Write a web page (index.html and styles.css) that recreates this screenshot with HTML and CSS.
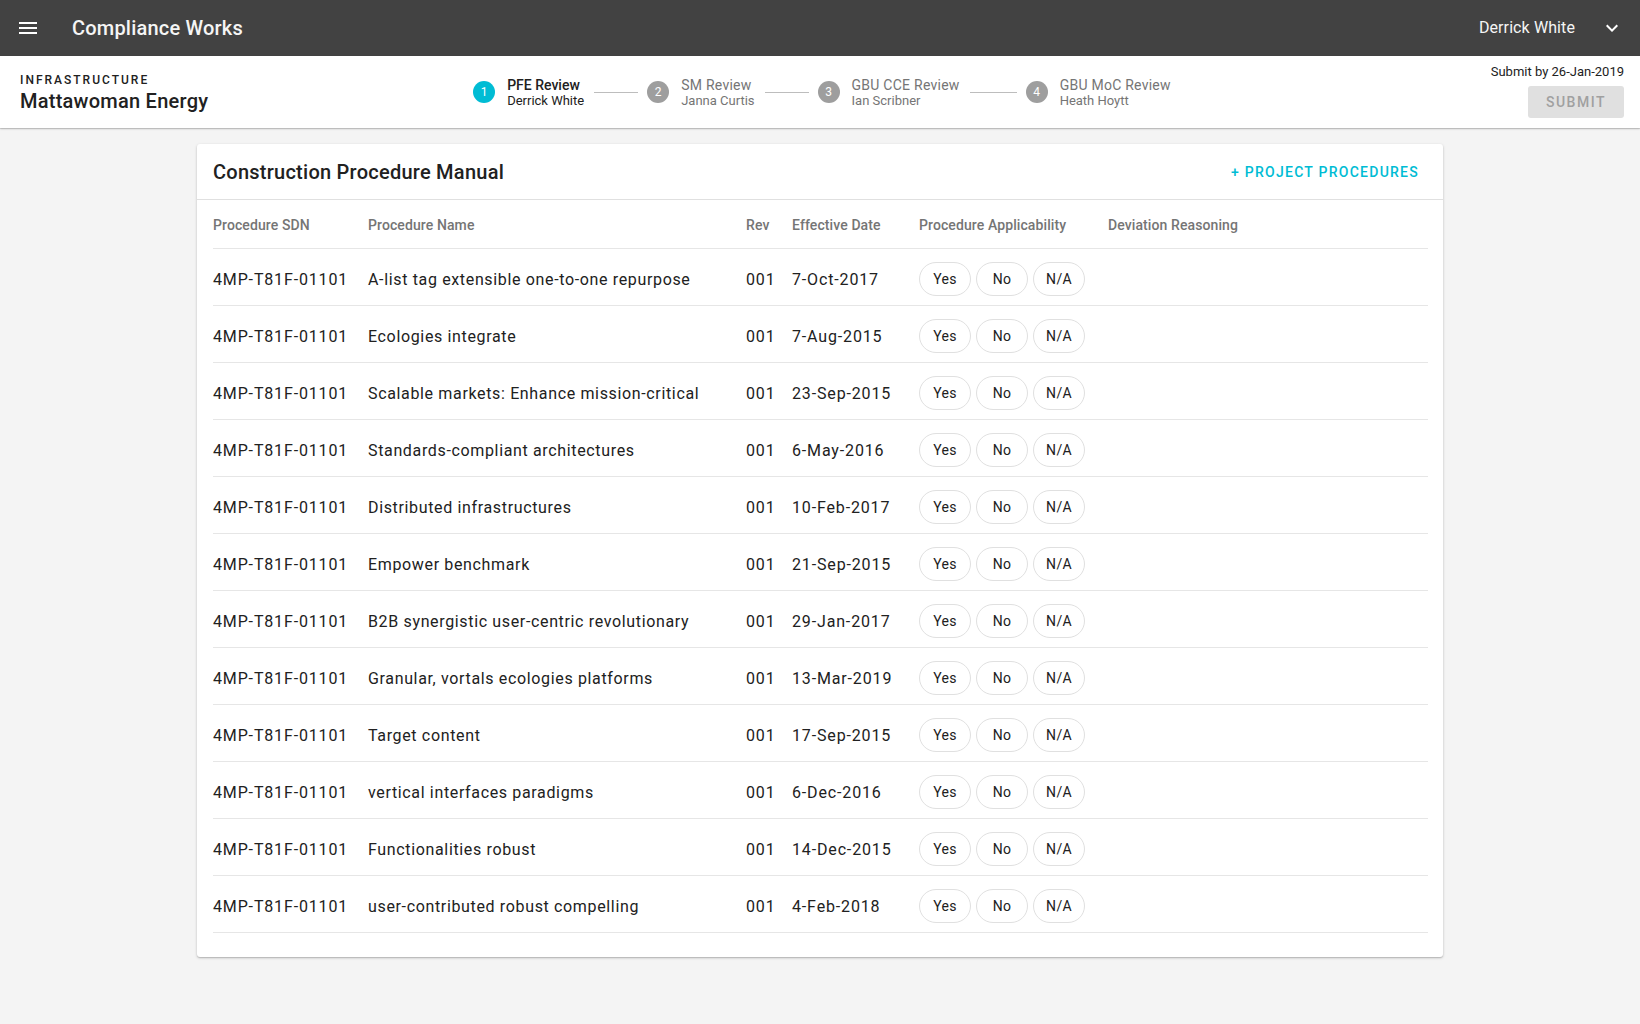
FILE: index.html
```html
<!DOCTYPE html>
<html lang="en">
<head>
<meta charset="utf-8">
<title>Compliance Works</title>
<link rel="stylesheet" href="styles.css">
</head>
<body>
<header class="appbar">
  <button class="icon-btn menu" aria-label="Menu">
    <svg width="24" height="24" viewBox="0 0 24 24"><path d="M3 18h18v-2H3v2zm0-5h18v-2H3v2zm0-7v2h18V6H3z" fill="#fff"/></svg>
  </button>
  <div class="app-title">Compliance Works</div>
  <div class="spacer"></div>
  <div class="user">Derrick White</div>
  <button class="icon-btn chevron" aria-label="Account menu">
    <svg width="24" height="24" viewBox="0 0 24 24"><path d="M16.59 8.59L12 13.17 7.41 8.59 6 10l6 6 6-6z" fill="#fff"/></svg>
  </button>
</header>

<section class="subbar">
  <div class="project">
    <div class="project-kind">INFRASTRUCTURE</div>
    <div class="project-name">Mattawoman Energy</div>
  </div>
  <ol class="stepper">
    <li class="step active">
      <span class="step-num">1</span>
      <span class="step-text"><span class="step-title">PFE Review</span><span class="step-sub">Derrick White</span></span>
    </li>
    <li class="connector"></li>
    <li class="step">
      <span class="step-num">2</span>
      <span class="step-text"><span class="step-title">SM Review</span><span class="step-sub">Janna Curtis</span></span>
    </li>
    <li class="connector"></li>
    <li class="step">
      <span class="step-num">3</span>
      <span class="step-text"><span class="step-title">GBU CCE Review</span><span class="step-sub">Ian Scribner</span></span>
    </li>
    <li class="connector long"></li>
    <li class="step">
      <span class="step-num">4</span>
      <span class="step-text"><span class="step-title">GBU MoC Review</span><span class="step-sub">Heath Hoytt</span></span>
    </li>
  </ol>
  <div class="submit-area">
    <div class="submit-by">Submit by 26-Jan-2019</div>
    <button class="submit-btn" disabled>SUBMIT</button>
  </div>
</section>

<main class="content">
  <section class="card">
    <div class="card-head">
      <h1 class="card-title">Construction Procedure Manual</h1>
      <button class="text-btn">+ PROJECT PROCEDURES</button>
    </div>
    <div class="table">
      <div class="row head">
        <div>Procedure SDN</div>
        <div>Procedure Name</div>
        <div>Rev</div>
        <div>Effective Date</div>
        <div>Procedure Applicability</div>
        <div>Deviation Reasoning</div>
      </div>
      <div class="row">
        <div>4MP-T81F-01101</div><div class="name">A-list tag extensible one-to-one repurpose</div><div>001</div><div>7-Oct-2017</div>
        <div class="pills"><button class="pill">Yes</button><button class="pill">No</button><button class="pill">N/A</button></div><div></div>
      </div>
      <div class="row">
        <div>4MP-T81F-01101</div><div class="name">Ecologies integrate</div><div>001</div><div>7-Aug-2015</div>
        <div class="pills"><button class="pill">Yes</button><button class="pill">No</button><button class="pill">N/A</button></div><div></div>
      </div>
      <div class="row">
        <div>4MP-T81F-01101</div><div class="name">Scalable markets: Enhance mission-critical</div><div>001</div><div>23-Sep-2015</div>
        <div class="pills"><button class="pill">Yes</button><button class="pill">No</button><button class="pill">N/A</button></div><div></div>
      </div>
      <div class="row">
        <div>4MP-T81F-01101</div><div class="name">Standards-compliant architectures</div><div>001</div><div>6-May-2016</div>
        <div class="pills"><button class="pill">Yes</button><button class="pill">No</button><button class="pill">N/A</button></div><div></div>
      </div>
      <div class="row">
        <div>4MP-T81F-01101</div><div class="name">Distributed infrastructures</div><div>001</div><div>10-Feb-2017</div>
        <div class="pills"><button class="pill">Yes</button><button class="pill">No</button><button class="pill">N/A</button></div><div></div>
      </div>
      <div class="row">
        <div>4MP-T81F-01101</div><div class="name">Empower benchmark</div><div>001</div><div>21-Sep-2015</div>
        <div class="pills"><button class="pill">Yes</button><button class="pill">No</button><button class="pill">N/A</button></div><div></div>
      </div>
      <div class="row">
        <div>4MP-T81F-01101</div><div class="name">B2B synergistic user-centric revolutionary</div><div>001</div><div>29-Jan-2017</div>
        <div class="pills"><button class="pill">Yes</button><button class="pill">No</button><button class="pill">N/A</button></div><div></div>
      </div>
      <div class="row">
        <div>4MP-T81F-01101</div><div class="name">Granular, vortals ecologies platforms</div><div>001</div><div>13-Mar-2019</div>
        <div class="pills"><button class="pill">Yes</button><button class="pill">No</button><button class="pill">N/A</button></div><div></div>
      </div>
      <div class="row">
        <div>4MP-T81F-01101</div><div class="name">Target content</div><div>001</div><div>17-Sep-2015</div>
        <div class="pills"><button class="pill">Yes</button><button class="pill">No</button><button class="pill">N/A</button></div><div></div>
      </div>
      <div class="row">
        <div>4MP-T81F-01101</div><div class="name">vertical interfaces paradigms</div><div>001</div><div>6-Dec-2016</div>
        <div class="pills"><button class="pill">Yes</button><button class="pill">No</button><button class="pill">N/A</button></div><div></div>
      </div>
      <div class="row">
        <div>4MP-T81F-01101</div><div class="name">Functionalities robust</div><div>001</div><div>14-Dec-2015</div>
        <div class="pills"><button class="pill">Yes</button><button class="pill">No</button><button class="pill">N/A</button></div><div></div>
      </div>
      <div class="row">
        <div>4MP-T81F-01101</div><div class="name">user-contributed robust compelling</div><div>001</div><div>4-Feb-2018</div>
        <div class="pills"><button class="pill">Yes</button><button class="pill">No</button><button class="pill">N/A</button></div><div></div>
      </div>
    </div>
  </section>
</main>
</body>
</html>
```

FILE: styles.css
```css
* { box-sizing: border-box; }
html, body { margin: 0; padding: 0; }
body {
  font-family: Roboto, "Liberation Sans", Arial, sans-serif;
  background: #f4f4f4;
  color: #212121;
  min-height: 1024px;
}
button { font-family: inherit; }

/* App bar */
.appbar {
  height: 56px;
  background: #424242;
  display: flex;
  align-items: center;
  padding: 0 16px;
  color: #f5f5f5;
}
.icon-btn {
  width: 24px;
  height: 24px;
  padding: 0;
  border: 0;
  background: none;
  display: flex;
}
.app-title {
  margin-left: 32px;
  font-size: 20px;
  font-weight: 500;
  letter-spacing: 0.2px;
}
.spacer { flex: 1; }
.user {
  font-size: 16px;
  letter-spacing: 0.1px;
  margin-right: 25px;
  margin-top: -1px;
}

/* Sub bar */
.subbar {
  height: 72px;
  background: #fff;
  display: grid;
  grid-template-columns: 1fr auto 1fr;
  align-items: stretch;
  padding: 0 16px 0 20px;
  box-shadow: 0 1px 2px rgba(0,0,0,0.2), 0 1px 0 rgba(0,0,0,0.1);
  position: relative;
}
.project { padding-top: 16px; }
.project-kind {
  font-size: 12px;
  line-height: 16px;
  font-weight: 500;
  letter-spacing: 2px;
  color: #212121;
}
.project-name {
  margin-top: 1px;
  font-size: 20px;
  line-height: 24px;
  font-weight: 500;
  letter-spacing: 0.25px;
  color: #212121;
}

.stepper {
  list-style: none;
  margin: 0;
  padding: 0;
  display: flex;
  align-items: center;
}
.step {
  display: flex;
  align-items: center;
  gap: 12px;
}
.step-num {
  width: 22px;
  height: 22px;
  border-radius: 50%;
  background: #9e9e9e;
  color: #fff;
  font-size: 12px;
  display: flex;
  align-items: center;
  justify-content: center;
}
.step.active .step-num { background: #00bcd4; }
.step-text { display: flex; flex-direction: column; padding-top: 2px; }
.step-title {
  font-size: 14px;
  line-height: 15px;
  letter-spacing: 0.25px;
  color: #757575;
}
.step-sub {
  font-size: 13px;
  line-height: 15px;
  color: #757575;
}
.step.active .step-title { color: #212121; font-weight: 500; letter-spacing: 0; }
.step.active .step-sub { color: #212121; }
.connector {
  width: 44px;
  height: 1px;
  background: #bdbdbd;
  margin: 0 9px 0 10px;
}
.connector.long { width: 47px; }

.submit-area {
  display: flex;
  flex-direction: column;
  align-items: flex-end;
  padding-top: 7px;
}
.submit-by {
  font-size: 13px;
  line-height: 17px;
  color: #212121;
}
.submit-btn {
  margin-top: 6px;
  width: 96px;
  height: 32px;
  border: 0;
  border-radius: 3px;
  background: #e0e0e0;
  color: #a0a0a0;
  font-size: 14px;
  font-weight: 500;
  letter-spacing: 1.5px;
}

/* Content */
.content { padding: 16px 0 40px; }
.card {
  width: 1246px;
  margin: 0 auto;
  background: #fff;
  border-radius: 3px;
  box-shadow: 0 1px 3px rgba(0,0,0,0.2), 0 1px 1px rgba(0,0,0,0.12);
  padding-bottom: 24px;
}
.card-head {
  height: 56px;
  border-bottom: 1px solid #e0e0e0;
  display: flex;
  align-items: center;
  justify-content: space-between;
  padding: 0 24px 0 16px;
}
.card-title {
  margin: 0;
  font-size: 20px;
  font-weight: 500;
  letter-spacing: 0.25px;
  color: #212121;
}
.text-btn {
  border: 0;
  background: none;
  padding: 0;
  color: #00bcd4;
  font-size: 14px;
  font-weight: 500;
  letter-spacing: 1.25px;
}

.table { padding: 0 15px 0 16px; }
.row {
  display: grid;
  grid-template-columns: 155px 378px 46px 127px 189px 1fr;
  align-items: center;
  height: 57px;
  padding-top: 4px;
  border-bottom: 1px solid #e6e6e6;
  font-size: 16px;
  letter-spacing: 0.85px;
  color: #212121;
}
.row .name { letter-spacing: 0.65px; }
.row.head {
  height: 49px;
  padding-top: 2px;
  font-size: 14px;
  font-weight: 500;
  letter-spacing: 0.1px;
  color: #757575;
}
.pills { display: flex; gap: 5px; }
.pill {
  width: 52px;
  height: 34px;
  border: 1px solid #e0e0e0;
  border-radius: 17px;
  background: #fff;
  color: #212121;
  font-size: 14px;
  letter-spacing: 0.3px;
  padding: 0;
}
```
